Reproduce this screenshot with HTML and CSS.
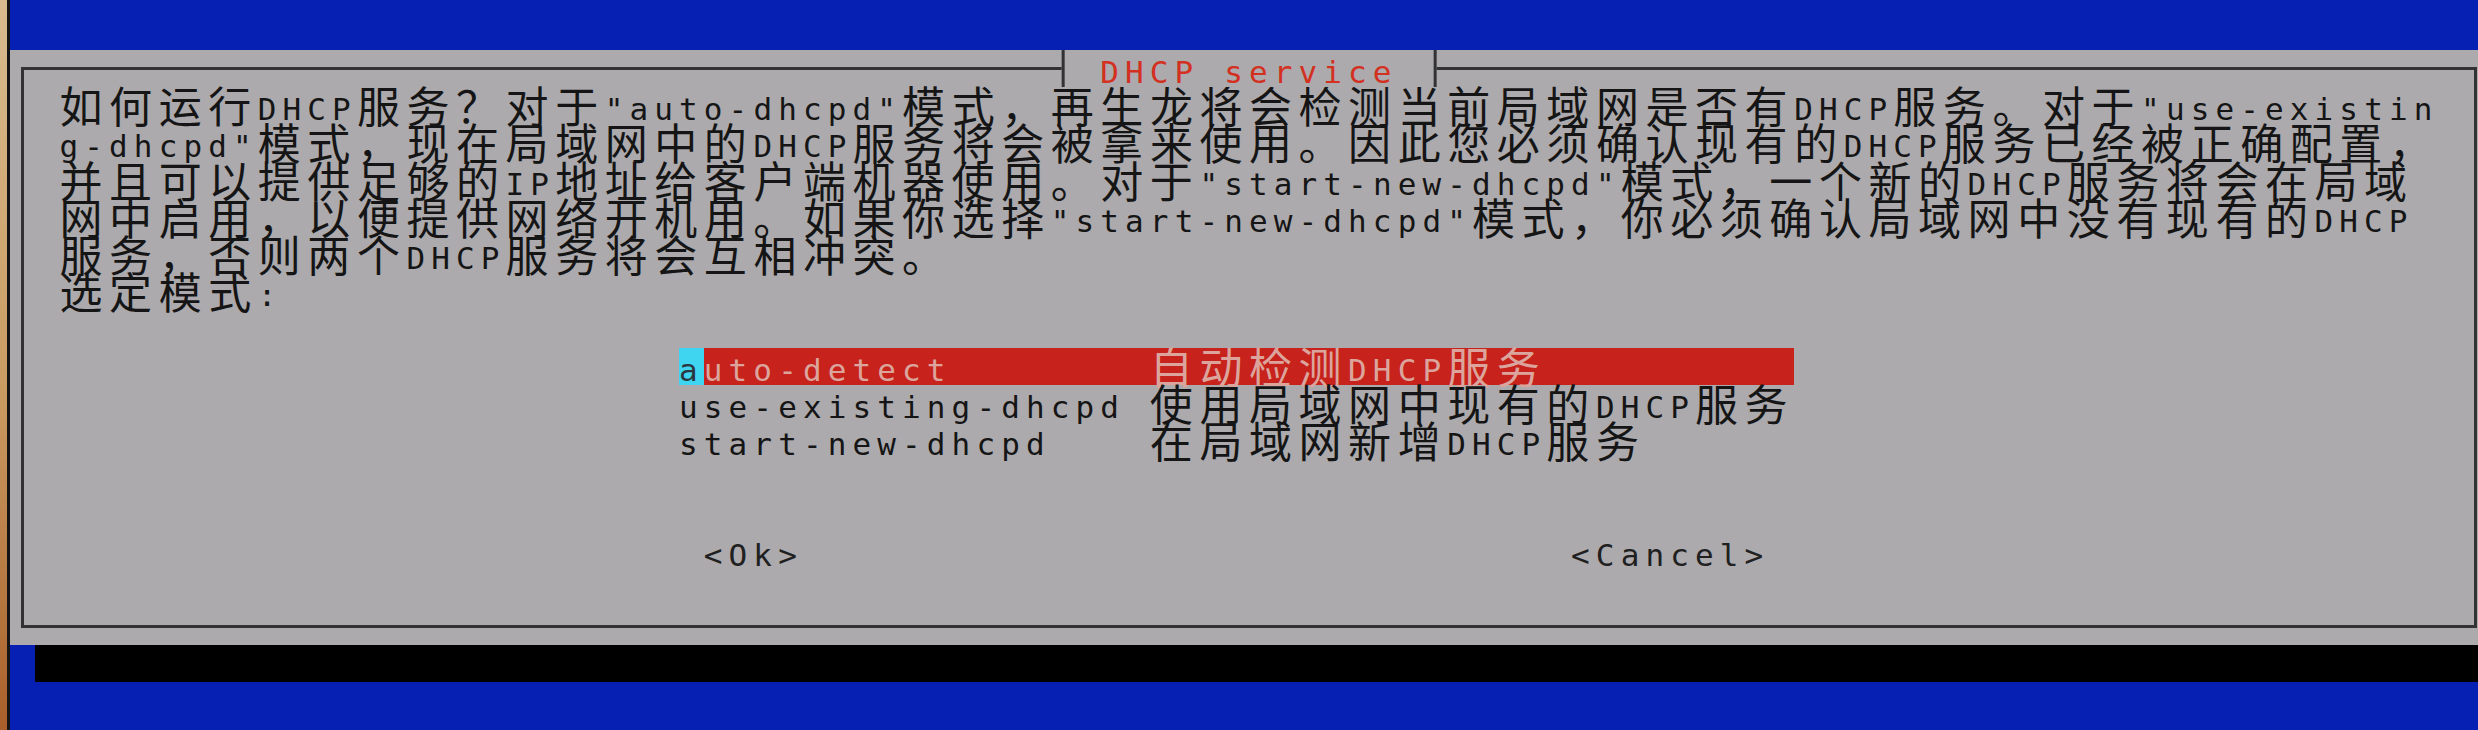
FILE: index.html
```html
<!DOCTYPE html>
<html lang="zh-CN">
<head>
<meta charset="utf-8">
<title>DHCP service</title>
<link rel="stylesheet" href="styles.css">
</head>
<body>
<div class="screen">
  <div class="bezel"></div>
  <div class="term">
    <div class="dialog">
      <div class="box">
        <div class="title">DHCP service</div>
        <div class="text">
          <div class="row"><span class="w">如何运行</span>DHCP<span class="w">服务？对于</span>"auto-dhcpd"<span class="w">模式，再生龙将会检测当前局域网是否有</span>DHCP<span class="w">服务。对于</span>"use-existin</div>
          <div class="row">g-dhcpd"<span class="w">模式，现在局域网中的</span>DHCP<span class="w">服务将会被拿来使用。因此您必须确认现有的</span>DHCP<span class="w">服务已经被正确配置，</span></div>
          <div class="row"><span class="w">并且可以提供足够的</span>IP<span class="w">地址给客户端机器使用。对于</span>"start-new-dhcpd"<span class="w">模式，一个新的</span>DHCP<span class="w">服务将会在局域</span></div>
          <div class="row"><span class="w">网中启用，以便提供网络开机用。如果你选择</span>"start-new-dhcpd"<span class="w">模式，你必须确认局域网中没有现有的</span>DHCP</div>
          <div class="row"><span class="w">服务，否则两个</span>DHCP<span class="w">服务将会互相冲突。</span></div>
          <div class="row"><span class="w">选定模式</span>:</div>
        </div>
        <div class="menu">
          <div class="item sel"><span class="tag"><span class="cur">a</span>uto-detect</span><span class="desc"><span class="w">自动检测</span>DHCP<span class="w">服务</span></span></div>
          <div class="item"><span class="tag">use-existing-dhcpd</span><span class="desc"><span class="w">使用局域网中现有的</span>DHCP<span class="w">服务</span></span></div>
          <div class="item"><span class="tag">start-new-dhcpd</span><span class="desc"><span class="w">在局域网新增</span>DHCP<span class="w">服务</span></span></div>
        </div>
        <div class="buttons">
          <span class="btn ok">&lt;Ok&gt;</span>
          <span class="btn cancel">&lt;Cancel&gt;</span>
        </div>
      </div>
    </div>
    <div class="shadow"></div>
  </div>
</div>
</body>
</html>
```

FILE: styles.css
```css
:root {
  --cw: 24.78px;
  --rh: 37.2px;
  --lh: 44.6px;
  --blue: #0620b4;
  --gray: #acaaad;
  --line: #323232;
}

html, body {
  margin: 0;
  padding: 0;
}

body {
  width: 2478px;
  height: 730px;
  overflow: hidden;
  background: var(--blue);
  font-family: "DejaVu Sans Mono", monospace;
  font-size: 31px;
  letter-spacing: 6.116px;
  color: #151515;
}

.screen {
  display: flex;
  height: 730px;
}

.bezel {
  flex: none;
  width: 7px;
  background: linear-gradient(#d8bb8e, #c99a60 55%, #a95f2b);
  border-right: 3.5px solid #141414;
}

.term {
  flex: 1;
  min-width: 0;
  overflow: hidden;
  padding-top: 50px;
  background: var(--blue);
}

.dialog {
  width: calc(var(--cw) * 100);
  height: calc(var(--rh) * 16);
  box-sizing: border-box;
  padding-top: 17.1px;
  background: var(--gray);
}

.box {
  position: relative;
  box-sizing: border-box;
  margin-left: 10.89px;
  width: 2456.2px;
  height: 561px;
  border: 3px solid var(--line);
  padding-top: 17.1px;
  padding-left: 35.67px;
}

.title {
  position: absolute;
  top: -20.1px;
  left: 50%;
  transform: translateX(-50%);
  box-sizing: border-box;
  width: calc(var(--cw) * 15 + 3px);
  height: var(--rh);
  border-left: 3px solid var(--line);
  border-right: 3px solid var(--line);
  background: var(--gray);
  color: #d3301f;
  text-align: center;
  line-height: var(--lh);
  white-space: nowrap;
}

.row {
  height: var(--rh);
  line-height: var(--lh);
  white-space: nowrap;
}

.w {
  font-family: "Noto Sans CJK SC", sans-serif;
  font-size: 43px;
  letter-spacing: 6.56px;
  line-height: 0;
  vertical-align: -2.5px;
}

.menu {
  margin-top: var(--rh);
  margin-left: calc(var(--cw) * 25);
  width: calc(var(--cw) * 45);
}

.item {
  display: flex;
  height: var(--rh);
  line-height: var(--lh);
  white-space: nowrap;
}

.tag {
  flex: none;
  width: calc(var(--cw) * 19);
}

.desc {
  flex: 1;
}

.sel {
  background: #c7221b;
  color: #dba59d;
}

.cur {
  display: inline-block;
  height: var(--rh);
  vertical-align: baseline;
  background: #3fd5f1;
  color: #2b3640;
}

.buttons {
  display: flex;
  margin-top: calc(var(--rh) * 2);
  height: var(--rh);
  line-height: var(--lh);
  white-space: nowrap;
  color: #202020;
}

.ok {
  margin-left: calc(var(--cw) * 26);
}

.cancel {
  margin-left: calc(var(--cw) * 31);
}

.shadow {
  margin-left: var(--cw);
  height: var(--rh);
  background: #000;
}
```
